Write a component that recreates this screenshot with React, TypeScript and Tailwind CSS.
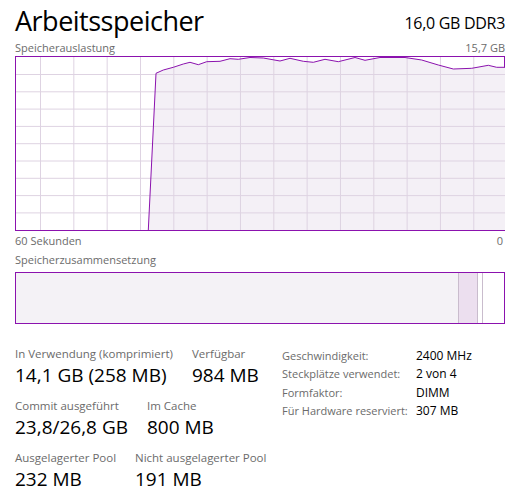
const font = { fontFamily: '"Open Sans", "Noto Sans", sans-serif' };

const linePoints = [
  [132.3, 173], [140, 16.3], [147.3, 13], [157.3, 10.3], [167.3, 7], [174, 5.3], [182.3, 7.7],
  [190.7, 4.7], [204, 4.3], [214, 1.7], [222.3, 2.3], [234, 0.5], [247.3, 1], [264, 4],
  [274, 1.3], [287.3, 4.3], [297.3, 5.3], [309, 2.3], [322.3, 4.7], [339, 0.5], [349, 3.3],
  [364, 0.5], [389, 0.5], [405.7, 3], [422.3, 8], [437.3, 12], [455.7, 11.3], [472.3, 8.3],
  [480.7, 10.3], [489, 10.3],
];

function UsageChart() {
  const line = linePoints.map(([x, y]) => `${x},${y}`).join(' ');
  const area = `${line} 489,173 132.3,173`;
  return (
    <div className="h-[175px] border border-[#8b12ae] bg-white">
      <svg width="489" height="173" viewBox="0 0 489 173" className="block">
        <polygon points={area} fill="#f4f0f6" />
        {Array.from({ length: 14 }).map((_, i) => (
          <line key={'v' + i} x1={24.5 + i * 33.33} y1={0} x2={24.5 + i * 33.33} y2={173} stroke="#ded3e2" strokeWidth="1" />
        ))}
        {Array.from({ length: 9 }).map((_, i) => (
          <line key={'h' + i} x1={0} y1={17.5 + i * 17.3} x2={489} y2={17.5 + i * 17.3} stroke="#ded3e2" strokeWidth="1" />
        ))}
        <polyline points={line} fill="none" stroke="#8b12ae" strokeWidth="1" />
      </svg>
    </div>
  );
}

function Stat({ label, value, className }: { label: string; value: string; className?: string }) {
  return (
    <div className={className}>
      <div className="text-[11.5px] leading-[16px] text-[#6b6b6b]">{label}</div>
      <div className="mt-[1px] text-[19px] leading-[24px] text-black">{value}</div>
    </div>
  );
}

export default function App() {
  const info = [
    ['Geschwindigkeit:', '2400 MHz'],
    ['Steckplätze verwendet:', '2 von 4'],
    ['Formfaktor:', 'DIMM'],
    ['Für Hardware reserviert:', '307 MB'],
  ];

  return (
    <div className="h-[500px] w-[517px] bg-white pl-[15px] pr-[12px] pt-[2px]" style={font}>
      {/* Header */}
      <div className="flex items-end justify-between">
        <h1 className="text-[27px] leading-[38px] tracking-[-0.5px] text-black">Arbeitsspeicher</h1>
        <span className="mb-[6px] text-[16px] leading-[22px] tracking-[-0.3px] text-black">16,0 GB DDR3</span>
      </div>

      <div className="flex justify-between text-[11px] leading-[16px] text-[#6b6b6b]">
        <span>Speicherauslastung</span>
        <span>15,7 GB</span>
      </div>

      <UsageChart />

      <div className="mt-[2px] flex justify-between text-[11px] leading-[16px] text-[#6b6b6b]">
        <span>60 Sekunden</span>
        <span className="pr-[2px]">0</span>
      </div>
      <div className="mt-[3px] text-[11px] leading-[16px] text-[#6b6b6b]">Speicherzusammensetzung</div>

      {/* Composition */}
      <div className="mt-[4px] flex h-[52px] border border-[#8b12ae]">
        <div className="flex-1 bg-[#f4f2f6]" />
        <div className="w-[20px] border-x border-[#c9bccd] bg-[#ecdfef]" />
        <div className="w-[4px]" />
        <div className="w-[22px] border-l border-[#c9bccd] bg-white" />
      </div>

      {/* Stats */}
      <div className="mt-[22px] flex items-start">
        <div className="w-[267px]">
          <div className="flex">
            <Stat label="In Verwendung (komprimiert)" value="14,1 GB (258 MB)" className="w-[177px]" />
            <Stat label="Verfügbar" value="984 MB" />
          </div>
          <div className="mt-[11px] flex">
            <Stat label="Commit ausgeführt" value="23,8/26,8 GB" className="w-[132px]" />
            <Stat label="Im Cache" value="800 MB" />
          </div>
          <div className="mt-[11px] flex">
            <Stat label="Ausgelagerter Pool" value="232 MB" className="w-[120px]" />
            <Stat label="Nicht ausgelagerter Pool" value="191 MB" />
          </div>
        </div>
        <div className="grid grid-cols-[134px_auto] pt-[1px] text-[11px] leading-[18.3px]">
          {info.map(([k, v]) => (
            <div key={k} className="contents">
              <span className="text-[#6b6b6b]">{k}</span>
              <span className="text-[12px] text-black">{v}</span>
            </div>
          ))}
        </div>
      </div>
    </div>
  );
}
